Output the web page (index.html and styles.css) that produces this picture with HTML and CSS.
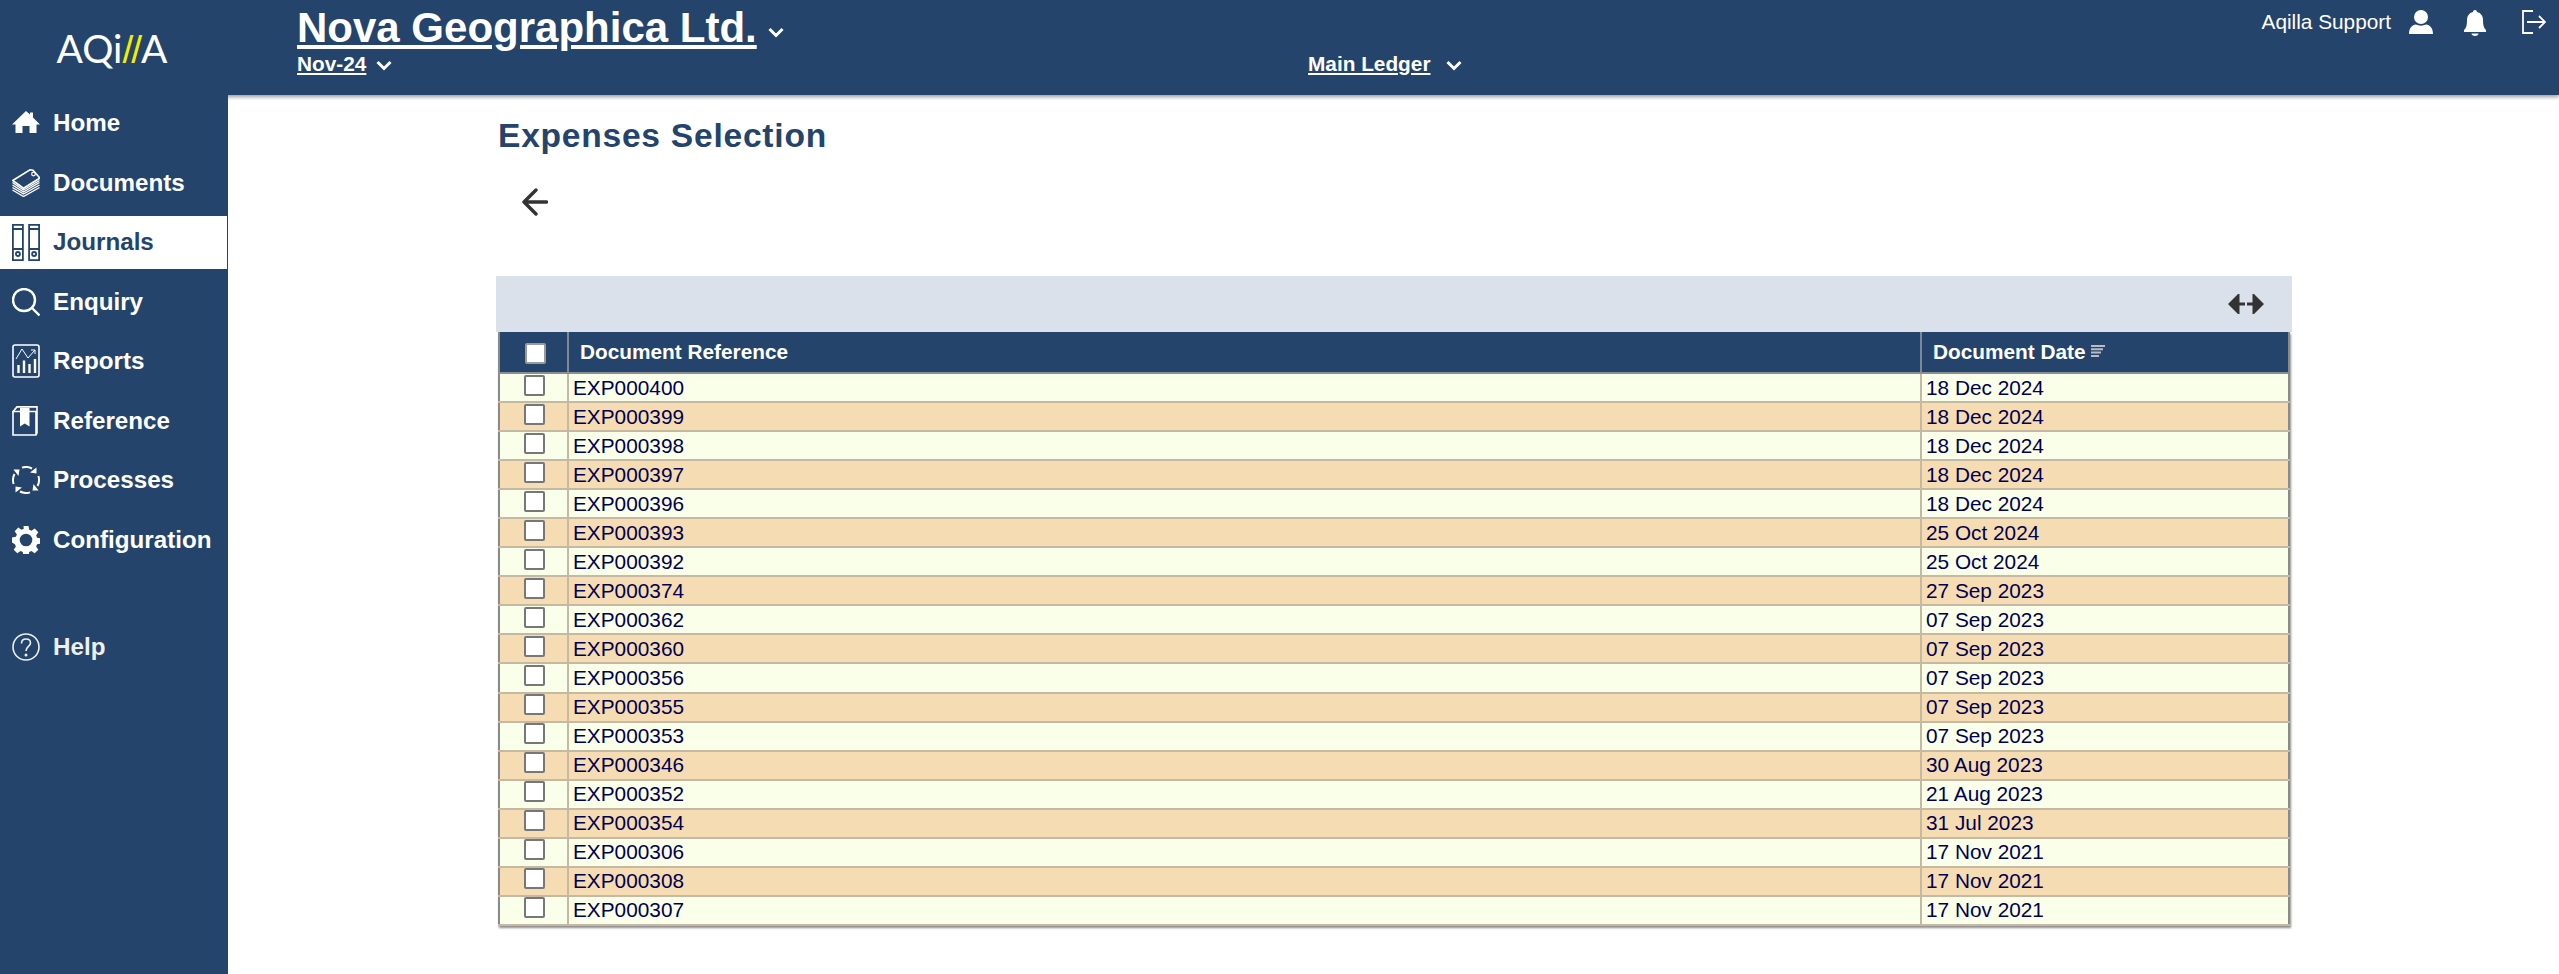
FILE: index.html
```html
<!DOCTYPE html>
<html lang="en">
<head>
<meta charset="utf-8">
<title>Expenses Selection</title>
<link rel="stylesheet" href="styles.css">
</head>
<body>
<header class="topbar">
  <div class="logo">AQi<span class="logo-mark">//</span>A</div>
  <div class="titles">
    <div class="company"><a class="link">Nova Geographica Ltd.</a><svg class="chev chev-company" viewBox="0 0 16 11"><path d="M1.500 2 8 8.500 14.500 2"/></svg></div>
    <div class="period"><a class="link">Nov-24</a><svg class="chev" viewBox="0 0 16 11"><path d="M1.500 2 8 8.500 14.500 2"/></svg></div>
  </div>
  <div class="ledger"><a class="link">Main Ledger</a><svg class="chev chev-ledger" viewBox="0 0 16 11"><path d="M1.500 2 8 8.500 14.500 2"/></svg></div>
  <div class="user">
    <span class="user-name">Aqilla Support</span>
    <svg class="user-icon" viewBox="0 0 24 24"><circle cx="12" cy="7" r="7"/><path d="M0 24c0-6 3-9 7-9.500 3 1.500 7 1.500 10 0 4 .5 7 3.500 7 9.500z"/></svg>
    <svg class="bell-icon" viewBox="0 0 22 26"><path d="M11 0c1.300 0 2 .8 2 2 4 1 6 4 6 8 0 6 1 8 3 10v2H0v-2c2-2 3-4 3-10 0-4 2-7 6-8 0-1.200.7-2 2-2z"/><path d="M7.500 23.500h7c0 1.500-1.500 2.500-3.500 2.500s-3.500-1-3.500-2.500z"/></svg>
    <svg class="exit-icon" viewBox="0 0 24 24"><path d="M11 1H1v22h10M5 12h18M17 6l6 6-6 6"/></svg>
  </div>
</header>
<div class="shell">
  <nav class="sidebar">
    <a class="nav-item">
      <svg class="nav-icon" viewBox="0 0 28 28"><path class="fill" d="M14 2 18 5.500V3.500h3v5l7 7h-3.500v8.500h-7v-7h-7v7h-7v-8.500H0z"/></svg>
      <span>Home</span>
    </a>
    <a class="nav-item">
      <svg class="nav-icon" viewBox="0 0 28 28"><path class="line-card" d="M.8 11.500 18 .8l3 .5 6.200 7v1.200L11.500 19.200z"/><circle class="line-thin" cx="21.500" cy="5" r="1.800"/><path class="line-stack" d="M.5 13.500 11.500 21 27.500 11.500M.5 16 11.500 23 27.500 13.500M.5 18.500 11.500 25 27.500 16M.5 21 11.500 27.500 27.500 18.500"/></svg>
      <span>Documents</span>
    </a>
    <a class="nav-item active">
      <svg class="nav-icon icon-journal" viewBox="0 0 28 37"><path class="line-dark" d="M.9.900h10v35.200H.9zM.9 5h10M.9 25h10M17.100.900h10v35.200h-10zM17.100 5h10M17.100 25h10"/><circle class="line-dark" cx="5.900" cy="30" r="2"/><circle class="line-dark" cx="22.100" cy="30" r="2"/></svg>
      <span>Journals</span>
    </a>
    <a class="nav-item">
      <svg class="nav-icon" viewBox="0 0 28 28"><circle class="line-thick" cx="12" cy="12" r="11"/><path class="line-thick" d="m20 20 7.500 7.500"/></svg>
      <span>Enquiry</span>
    </a>
    <a class="nav-item">
      <svg class="nav-icon icon-report" viewBox="0 0 28 34"><rect class="line" x="1" y="1" width="26" height="32" rx="2"/><path class="thin" d="m4 15 6-10 6 9 7-8M19 6h4v4"/><path class="line-thick" d="M6.500 29v-8M12 29V16.500M17.500 29v-9M23 29V15"/></svg>
      <span>Reports</span>
    </a>
    <a class="nav-item">
      <svg class="nav-icon icon-book" viewBox="0 0 26 30"><path class="line" d="M1 5.500V29h23l1-2V.900H5L1 5.500H24V29"/><path class="fill" d="M8 2h9.500v18.500l-4.800-3-4.700 3z"/></svg>
      <span>Reference</span>
    </a>
    <a class="nav-item">
      <svg class="nav-icon" viewBox="0 0 28 28">
        <g><path class="line-arc" d="M10 1.600A13 13 0 0 1 20 2.500"/><path class="fill" d="m24.500 1.500 0 6-6.500-1z"/></g>
        <g transform="rotate(90 14 14)"><path class="line-arc" d="M10 1.600A13 13 0 0 1 20 2.500"/><path class="fill" d="m24.500 1.500 0 6-6.500-1z"/></g>
        <g transform="rotate(180 14 14)"><path class="line-arc" d="M10 1.600A13 13 0 0 1 20 2.500"/><path class="fill" d="m24.500 1.500 0 6-6.500-1z"/></g>
        <g transform="rotate(270 14 14)"><path class="line-arc" d="M10 1.600A13 13 0 0 1 20 2.500"/><path class="fill" d="m24.500 1.500 0 6-6.500-1z"/></g>
      </svg>
      <span>Processes</span>
    </a>
    <a class="nav-item">
      <svg class="nav-icon" viewBox="0 0 28 28"><path class="fill" fill-rule="evenodd" d="M11.500 0h5l.7 3.800 2.300 1 3.200-2.200 3.600 3.600-2.200 3.200 1 2.300 3.900.8v5l-3.900.7-1 2.300 2.200 3.200-3.600 3.600-3.200-2.200-2.300 1-.7 3.900h-5l-.7-3.900-2.300-1-3.200 2.200-3.600-3.600 2.200-3.200-1-2.300L0 16.500v-5l3.900-.8 1-2.300-2.200-3.200 3.600-3.600 3.200 2.200 2.300-1zM14 7.700a6.300 6.300 0 1 0 0 12.600 6.300 6.300 0 0 0 0-12.600z"/></svg>
      <span>Configuration</span>
    </a>
    <a class="nav-item nav-help">
      <svg class="nav-icon" viewBox="0 0 28 28"><circle class="line" cx="14" cy="14" r="13"/><path class="line" d="M9.500 10.500c0-3 2-4.500 4.500-4.500s4.500 1.500 4.500 4c0 3.500-4.500 3.500-4.500 8"/><circle class="fill" cx="14" cy="22" r="1.500"/></svg>
      <span>Help</span>
    </a>
  </nav>
  <main class="content">
    <h1 class="page-title">Expenses Selection</h1>
    <button class="back" type="button" aria-label="Back"><svg viewBox="0 0 26 28"><path d="M24.500 14H2.500M14 2 2 14 14 26"/></svg></button>
    <div class="toolbar">
      <svg class="expand" viewBox="0 0 36 20"><path class="expand-fill" d="M0 10 10 0h1.500v20H10zM36 10 26 0h-1.500v20H26z"/><path class="expand-bar" d="M11 10h6M19 10h6"/></svg>
    </div>
    <table class="grid">
      <colgroup><col class="col-check"><col class="col-ref"><col class="col-date"></colgroup>
      <thead>
        <tr>
          <th class="cell-check"><input class="check check-head" type="checkbox" aria-label="Select all"></th>
          <th>Document Reference</th>
          <th>Document Date<svg class="sort" viewBox="0 0 14 12"><path d="M0 1h14M0 4.300h12M0 7.600h10M0 10.900h8"/></svg></th>
        </tr>
      </thead>
      <tbody>
        <tr><td class="cell-check"><input class="check" type="checkbox"></td><td>EXP000400</td><td>18 Dec 2024</td></tr>
        <tr><td class="cell-check"><input class="check" type="checkbox"></td><td>EXP000399</td><td>18 Dec 2024</td></tr>
        <tr><td class="cell-check"><input class="check" type="checkbox"></td><td>EXP000398</td><td>18 Dec 2024</td></tr>
        <tr><td class="cell-check"><input class="check" type="checkbox"></td><td>EXP000397</td><td>18 Dec 2024</td></tr>
        <tr><td class="cell-check"><input class="check" type="checkbox"></td><td>EXP000396</td><td>18 Dec 2024</td></tr>
        <tr><td class="cell-check"><input class="check" type="checkbox"></td><td>EXP000393</td><td>25 Oct 2024</td></tr>
        <tr><td class="cell-check"><input class="check" type="checkbox"></td><td>EXP000392</td><td>25 Oct 2024</td></tr>
        <tr><td class="cell-check"><input class="check" type="checkbox"></td><td>EXP000374</td><td>27 Sep 2023</td></tr>
        <tr><td class="cell-check"><input class="check" type="checkbox"></td><td>EXP000362</td><td>07 Sep 2023</td></tr>
        <tr><td class="cell-check"><input class="check" type="checkbox"></td><td>EXP000360</td><td>07 Sep 2023</td></tr>
        <tr><td class="cell-check"><input class="check" type="checkbox"></td><td>EXP000356</td><td>07 Sep 2023</td></tr>
        <tr><td class="cell-check"><input class="check" type="checkbox"></td><td>EXP000355</td><td>07 Sep 2023</td></tr>
        <tr><td class="cell-check"><input class="check" type="checkbox"></td><td>EXP000353</td><td>07 Sep 2023</td></tr>
        <tr><td class="cell-check"><input class="check" type="checkbox"></td><td>EXP000346</td><td>30 Aug 2023</td></tr>
        <tr><td class="cell-check"><input class="check" type="checkbox"></td><td>EXP000352</td><td>21 Aug 2023</td></tr>
        <tr><td class="cell-check"><input class="check" type="checkbox"></td><td>EXP000354</td><td>31 Jul 2023</td></tr>
        <tr><td class="cell-check"><input class="check" type="checkbox"></td><td>EXP000306</td><td>17 Nov 2021</td></tr>
        <tr><td class="cell-check"><input class="check" type="checkbox"></td><td>EXP000308</td><td>17 Nov 2021</td></tr>
        <tr><td class="cell-check"><input class="check" type="checkbox"></td><td>EXP000307</td><td>17 Nov 2021</td></tr>
      </tbody>
    </table>
  </main>
</div>
</body>
</html>
```

FILE: styles.css
```css
* { box-sizing: border-box; }
html, body { margin: 0; height: 100%; overflow: hidden; background: #fff; }
body { font-family: "Liberation Sans", Arial, sans-serif; color: #24446b; display: flex; flex-direction: column; }

.topbar { height: 95px; flex: none; background: #24446b; color: #fff; display: flex; box-shadow: 0 2px 4px rgba(0, 0, 0, .4); position: relative; z-index: 2; }
.logo { width: 228px; flex: none; padding: 25px 4px 0 0; text-align: center; font-family: Lato, "Liberation Sans", sans-serif; font-weight: 400; font-size: 39px; line-height: 46px; color: #fff; }
.logo-mark { color: #f2ee00; font-family: "Liberation Sans", sans-serif; font-weight: 400; letter-spacing: -2px; padding-right: 1px; }
.titles { width: 1011px; margin-left: 69px; flex: none; }
.link { text-decoration: underline; }
.company { font-size: 42px; font-weight: 700; line-height: 46px; height: 52px; padding-top: 5px; white-space: nowrap; }
.period { font-size: 20.800px; font-weight: 700; line-height: 24px; }
.ledger { font-size: 20.800px; font-weight: 700; line-height: 24px; padding-top: 52px; white-space: nowrap; }
.chev { width: 16px; height: 11px; margin-left: 10px; fill: none; stroke: #fff; stroke-width: 3; }
.chev-company { margin-left: 11px; vertical-align: 4px; }
.chev-ledger { margin-left: 15px; }
.user { margin-left: auto; padding: 10px 12px 0 0; display: flex; align-items: flex-start; font-size: 20.800px; }
.user-name { line-height: 24px; }
.user-icon { width: 24px; height: 24px; margin-left: 18px; fill: #fff; }
.bell-icon { width: 22px; height: 26px; margin-left: 31px; fill: #fff; }
.exit-icon { width: 24px; height: 24px; margin-left: 36px; margin-right: 1px; fill: none; stroke: #fff; stroke-width: 1.800; }

.shell { flex: 1; display: flex; min-height: 0; }
.sidebar { width: 228px; flex: none; background: #24446b; color: #fff; padding-top: 2px; display: flex; flex-direction: column; gap: 6.500px; position: relative; z-index: 3; }
.nav-item { height: 53px; flex: none; display: flex; align-items: center; padding: 0 0 1px 12px; font-size: 24.200px; font-weight: 700; }
.nav-item span { margin-left: 13px; }
.nav-item.active { background: #fff; color: #24446b; margin-right: 1px; }
.nav-help { margin-top: 47.500px; opacity: .92; }
.nav-icon { width: 28px; height: 28px; flex: none; }
.icon-journal { height: 37px; }
.icon-report { height: 34px; }
.icon-book { width: 26px; height: 30px; margin-right: 2px; }
.fill { fill: #fff; stroke: none; }
.line { fill: none; stroke: #fff; stroke-width: 1.600; }
.thin { fill: none; stroke: #fff; stroke-width: 1; }
.line-thin { fill: none; stroke: #fff; stroke-width: 1.200; }
.line-card { fill: #24446b; stroke: #fff; stroke-width: 1.600; }
.line-stack { fill: none; stroke: #fff; stroke-width: 1.400; }
.line-thick { fill: none; stroke: #fff; stroke-width: 2.400; }
.line-arc { fill: none; stroke: #fff; stroke-width: 2; }
.line-dark { fill: none; stroke: #24446b; stroke-width: 1.800; }

.content { flex: 1; min-width: 0; padding: 0 267px 0 268px; }
.page-title { margin: 0 0 0 2px; padding-top: 22px; font-size: 33.600px; letter-spacing: .75px; line-height: 38px; font-weight: 700; color: #24446b; }
.back { display: block; margin: 33px 0 0 26px; padding: 0; width: 26px; height: 28px; border: 0; background: none; }
.back svg { display: block; width: 26px; height: 28px; fill: none; stroke: #333; stroke-width: 3.400; stroke-linecap: round; stroke-linejoin: round; }
.toolbar { height: 56px; margin-top: 60px; background: #dbe1ea; display: flex; justify-content: flex-end; align-items: center; padding-right: 28px; }
.expand { width: 36px; height: 20px; }
.expand-fill { fill: #333; }
.expand-bar { stroke: #333; stroke-width: 3; fill: none; }

.grid { width: 1792px; margin-left: 2px; table-layout: fixed; border-collapse: collapse; border-left: 2px solid #8a8a8a; border-right: 2px solid #8a8a8a; box-shadow: 1px 2px 2px rgba(0, 0, 0, .45); font-size: 20.800px; }
.col-check { width: 69px; }
.col-ref { width: 1353px; }
.grid th { height: 41px; padding: 0 0 1px 11px; text-align: left; background: #24446b; color: #fff; font-weight: 700; border-left: 2px solid #7d8998; border-bottom: 2px solid #8a8f96; white-space: nowrap; }
.grid td { height: 29.050px; padding: 0 0 0 4px; color: #000050; border-left: 2px solid #c6b9a4; border-bottom: 2px solid #c6b9a4; line-height: 24px; }
.grid th:first-child, .grid td:first-child { border-left: 0; padding: 0; }
.grid tbody tr:nth-child(odd) { background: #f9ffe9; }
.grid tbody tr:nth-child(even) { background: #f5dcb2; }
.cell-check { text-align: center; }
.check { appearance: none; -webkit-appearance: none; display: block; width: 21px; height: 21px; margin: -5px 0 0 24px; border: 2px solid #777; border-radius: 2px; background: #fff; }
.check-head { margin: 2px 0 0 25px; width: 21px; border-color: #9a9a9a; }
.sort { width: 14px; height: 12px; margin-left: 5px; vertical-align: 2px; fill: none; stroke: #b8bcc4; stroke-width: 2; }
```
